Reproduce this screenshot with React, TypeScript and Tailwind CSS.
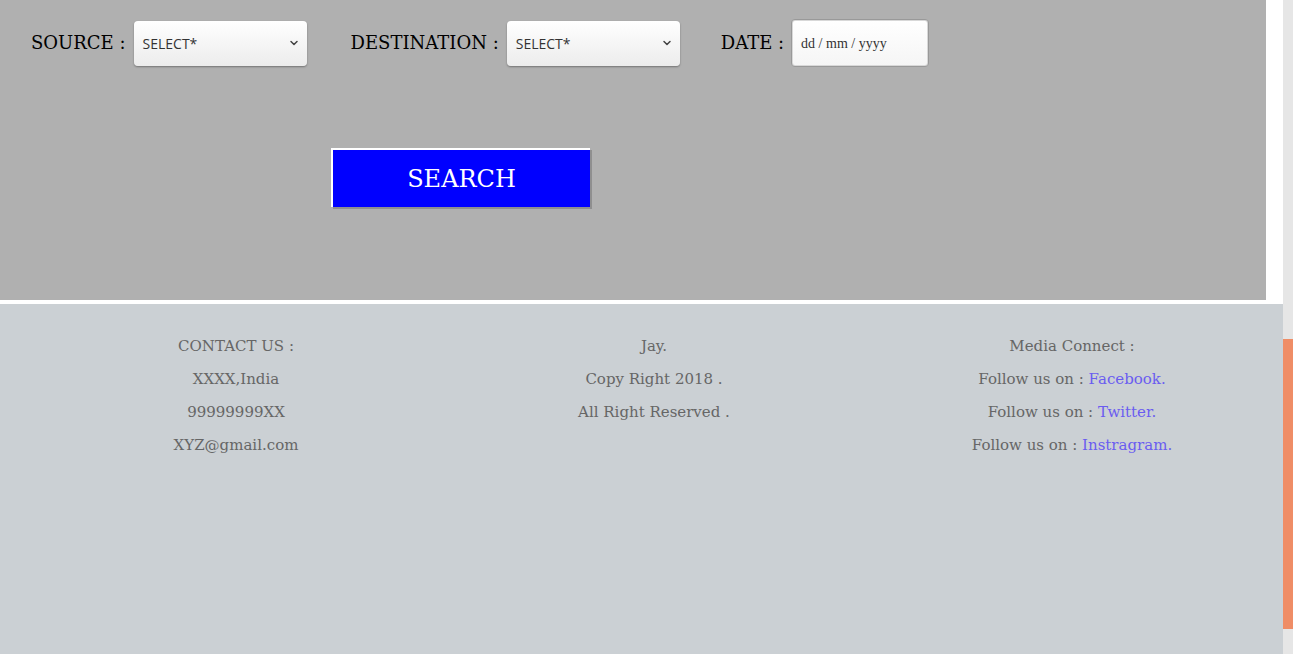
import { ChevronDown } from "lucide-react";

const serif = "font-['DejaVu_Serif',serif]";

function SelectBox({ className }: { className: string }) {
  return (
    <div
      className={`relative flex h-[45px] w-[173px] items-center rounded-[4px] bg-gradient-to-b from-white to-[#ececec] pl-[9px] shadow-[0_1px_2px_rgba(0,0,0,0.35)] ${className}`}
    >
      <span className="font-['Open_Sans',sans-serif] text-[14px] text-[#333]">SELECT*</span>
      <ChevronDown className="absolute right-[7px] h-[12px] w-[12px] text-[#444]" strokeWidth={3} />
    </div>
  );
}

function FooterLine({ text, link }: { text: string; link?: string }) {
  return (
    <p className="h-[33px]">
      {text}
      {link && <a className="text-[#6a5cf0]">{link}</a>}
    </p>
  );
}

export default function App() {
  return (
    <div className="flex h-[654px] w-[1293px] overflow-hidden bg-white">
      <div className="flex w-[1283px] flex-col">
        <div className={`h-[300px] w-[1266px] bg-[#b0b0b0] ${serif}`}>
          <div className="flex items-center pt-[19px] text-[18px] text-black">
            <span className="ml-[31px] -mt-[2px]">SOURCE :</span>
            <SelectBox className="ml-[8px]" />
            <span className="ml-[44px] -mt-[2px]">DESTINATION :</span>
            <SelectBox className="ml-[8px]" />
            <span className="ml-[41px] -mt-[2px]">DATE :</span>
            <div className="ml-[7px] flex h-[48px] w-[138px] items-center rounded-[4px] border border-[#999] bg-gradient-to-b from-white to-[#f5f5f5] pl-[9px] font-['Liberation_Serif',serif] text-[14px] text-[#333] shadow-[inset_0_0_0_1px_#d8d8d8]">
              dd / mm / yyyy
            </div>
          </div>
          <button className="ml-[331px] mt-[81px] flex h-[59px] w-[259px] items-center justify-center border-l-2 border-t-2 border-white bg-[#0000ff] text-[24px] text-white shadow-[2px_2px_0_#8f8f8f]">
            SEARCH
          </button>
        </div>
        <footer
          className={`mt-[4px] grid flex-1 grid-cols-[418px_418px_418px] bg-[#cbd0d4] pl-[27px] pt-[32px] text-center text-[15px] leading-[20px] text-[#666] ${serif}`}
        >
          <div>
            <FooterLine text="CONTACT US :" />
            <FooterLine text="XXXX,India" />
            <FooterLine text="99999999XX" />
            <FooterLine text="XYZ@gmail.com" />
          </div>
          <div>
            <FooterLine text="Jay." />
            <FooterLine text="Copy Right 2018 ." />
            <FooterLine text="All Right Reserved ." />
          </div>
          <div>
            <FooterLine text="Media Connect :" />
            <FooterLine text="Follow us on : " link="Facebook." />
            <FooterLine text="Follow us on : " link="Twitter." />
            <FooterLine text="Follow us on : " link="Instragram." />
          </div>
        </footer>
      </div>
      <div className="flex w-[10px] flex-col bg-[#e6e6e6]">
        <div className="h-[339px]" />
        <div className="h-[290px] bg-[#ef8d66]" />
      </div>
    </div>
  );
}
